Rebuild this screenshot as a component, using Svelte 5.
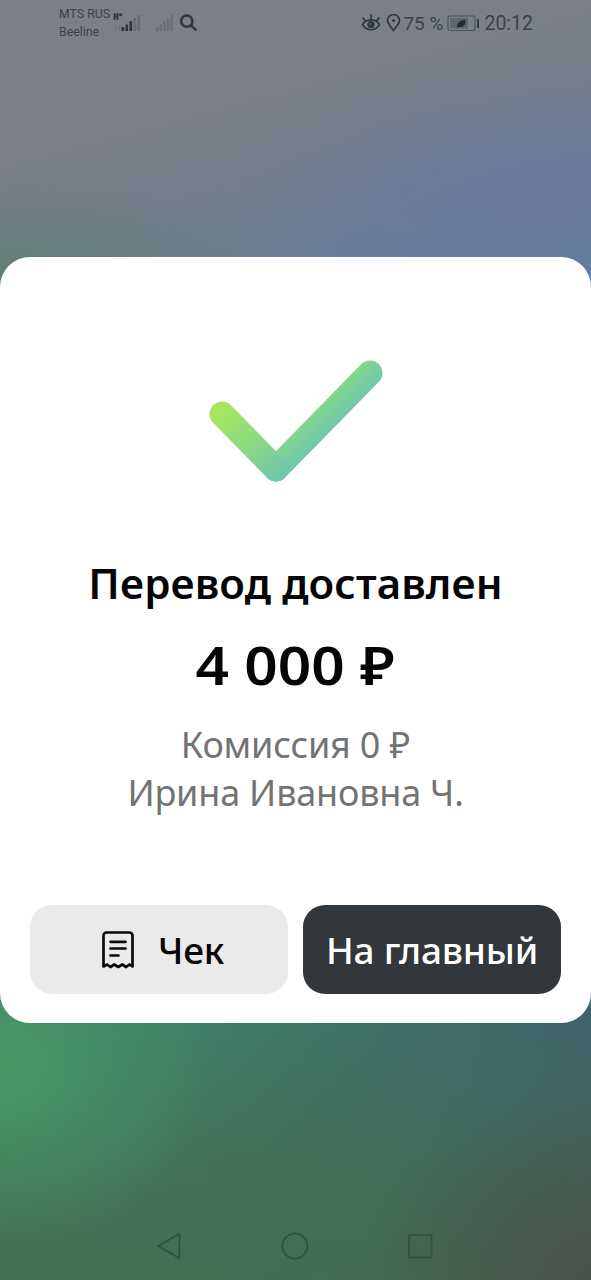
<script lang="ts">
	/**
	 * TransferResult - Confirmation sheet shown once a transfer has been delivered.
	 */
	const carriers = ['MTS RUS', 'Beeline'];
	const battery = '75 %';
	const time = '20:12';

	const transfer = {
		title: 'Перевод доставлен',
		amount: '4 000 ₽',
		fee: 'Комиссия 0 ₽',
		recipient: 'Ирина Ивановна Ч.'
	};

	// Signal bar heights, left to right
	const bars = [4, 6.5, 10, 13, 16];
</script>

<div class="screen">
	<header class="status-bar">
		<div class="carriers">
			{#each carriers as carrier (carrier)}
				<span>{carrier}</span>
			{/each}
		</div>
		<svg class="signal-main" width="29" height="22" viewBox="0 0 29 22">
			<path d="M2.500 2v7M5.500 2v7M2.500 5.500h3M7.100 3.800h3M8.600 2.300v3" stroke="#30363d" stroke-width="1.8" />
			<path d="M4 14v5M2.500 17L4 19L5.500 17M7.500 19v-5M6.200 16L7.500 14l1.300 2" stroke="#686f78" stroke-width=".8" fill="none" />
			{#each bars as h, i}
				<rect x={9.5 + i * 4} y={20 - h} width="2.6" height={h} fill={i < 3 ? '#30353c' : '#646b75'} />
			{/each}
		</svg>
		<svg class="signal-second" width="21" height="22" viewBox="0 0 21 22">
			{#each bars as h, i}
				<rect x={1 + i * 3.6} y={20 - h} width="2.3" height={h} fill="#676e77" />
			{/each}
		</svg>
		<svg class="search" width="18" height="18" viewBox="0 0 18 18">
			<circle cx="6.800" cy="7.200" r="5.600" />
			<path d="M10.800 11.200l5.400 5.200" />
		</svg>

		<div class="status-right">
			<svg width="20" height="18" viewBox="0 0 20 18">
				<path d="M1.500 10.500C5.500 4.300 14.500 4.300 18.500 10.500C14.500 17.500 5.500 17.500 1.500 10.500ZM10 5.500V.5M4.200 7L1.800 3.500M15.800 7L18.200 3.500" fill="none" stroke="#30363e" stroke-width="1.6" />
				<circle cx="10" cy="10.500" r="3.600" fill="#30363e" />
				<circle cx="9.300" cy="9.800" r=".9" fill="#727b88" />
			</svg>
			<svg class="pin" width="15" height="18" viewBox="0 0 15 18">
				<path d="M7.500 16.500C5.500 13 1.500 10 1.500 6.500a6 6 0 0 1 12 0C13.500 10 9.500 13 7.500 16.500Z" fill="none" stroke="#30363e" stroke-width="1.7" />
				<circle cx="7.500" cy="6.500" r="1.500" fill="#30363e" />
			</svg>
			<span class="percent">{battery}</span>
			<svg class="battery" width="33" height="17" viewBox="0 0 33 17">
				<rect x="1" y="1" width="27" height="14.500" rx="2" fill="none" stroke="#4b535e" stroke-width="1.2" />
				<rect x="3" y="3" width="18" height="10.500" fill="#5e6670" />
				<path d="M10 13C9.500 8 12.500 5.500 18.500 4.500C19 10 16.500 13 11.800 11.700L10 13Z" fill="#262c33" />
				<rect x="30" y="4" width="2" height="9" rx=".5" fill="#343b44" />
			</svg>
			<span class="time">{time}</span>
		</div>
	</header>

	<main class="sheet">
		<svg class="check" width="174" height="124" viewBox="0 0 174 124" fill="none">
			<defs>
				<linearGradient id="check-fill" gradientUnits="userSpaceOnUse" x1="12" y1="48" x2="74" y2="110">
					<stop offset="0" stop-color="#a9e55f" />
					<stop offset=".55" stop-color="#8bda84" />
					<stop offset="1" stop-color="#70c8ab" />
				</linearGradient>
				<linearGradient id="check-arm" gradientUnits="userSpaceOnUse" x1="102" y1="52" x2="126" y2="76">
					<stop offset="0" stop-color="#84d88a" />
					<stop offset=".8" stop-color="#70c8ab" />
				</linearGradient>
			</defs>
			<path d="M67 110L161 14" stroke="url(#check-arm)" />
			<path d="M13 55L67 110" stroke="url(#check-fill)" />
		</svg>

		<h1>{transfer.title}</h1>
		<p class="amount">{transfer.amount}</p>
		<p class="detail fee">{transfer.fee}</p>
		<p class="detail recipient">{transfer.recipient}</p>

		<div class="actions">
			<button class="receipt-btn">
				<svg width="32" height="38" viewBox="0 0 32 38" fill="none" stroke="#080808" stroke-width="2.700" stroke-linejoin="round" stroke-linecap="round">
					<path d="M1.500 35.500V4.500a3 3 0 0 1 3-3h23a3 3 0 0 1 3 3V35.500l-3-2-3.400 2.500-3.800-2.500-4 2.500-4-2.500-3.800 2.500-3.500-2.500-3 2Z" />
					<path d="M8.500 10.800h15M8.500 17.500h15M8.500 24.500h8" />
				</svg>
				<span>Чек</span>
			</button>
			<button class="home-btn"><span>На главный</span></button>
		</div>
	</main>

	<nav class="nav-bar">
		<svg width="28" height="28" viewBox="0 0 28 28"><path d="M2.500 14L22 2.500Q23.500 1.500 23.500 3.500V24.500Q23.500 26.500 22 25.500Z" /></svg>
		<svg width="28" height="28" viewBox="0 0 28 28"><circle cx="14" cy="14" r="12.500" /></svg>
		<svg width="28" height="28" viewBox="0 0 28 28"><rect x="3" y="3" width="22.500" height="22.500" rx="1" /></svg>
	</nav>
</div>

<style>
	:global(body) {
		margin: 0;
	}

	.screen {
		display: flex;
		flex-direction: column;
		height: 1280px;
		overflow: hidden;
		font-family: 'Noto Sans', sans-serif;
		background:
			radial-gradient(ellipse 280px 120px at 0 100%, #5a7f6a 0%, #5a7f6a70 40%, #5a7f6a00 100%) 0 0 / 100% 290px no-repeat,
			radial-gradient(ellipse 320px 130px at 92% 68%, #6b7b9f 0%, #6b7b9f80 45%, #6b7b9f00 100%) 0 0 / 100% 290px no-repeat,
			linear-gradient(165deg, #7d8086 0%, #7b7f87 38%, #6e7f92 68%, #5d7fa0 95%) 0 0 / 100% 290px no-repeat,
			radial-gradient(ellipse 210px 180px at 0 27%, #489966 0%, #48996680 45%, #48996600 100%) 0 100% / 100% 290px no-repeat,
			radial-gradient(ellipse 230px 190px at 100% 100%, #48514b 0%, #48514b80 45%, #48514b00 100%) 0 100% / 100% 290px no-repeat,
			linear-gradient(to bottom, #446b4a00 15%, #446b4a88 65%, #446b4acc 100%) 0 100% / 100% 290px no-repeat,
			linear-gradient(105deg, #43855f 0%, #418068 25%, #3f7566 50%, #40676a 80%, #435f68 100%) 0 100% / 100% 290px no-repeat;
	}

	.status-bar {
		display: flex;
		align-items: flex-start;
		box-sizing: border-box;
		height: 257px;
		padding: 5px 58px 0 59px;
		font-family: Roboto, sans-serif;
		color: #3b424b;
	}

	.carriers {
		display: flex;
		flex-direction: column;
		width: 53px;
		font-size: 12.3px;
		line-height: 18px;
		white-space: nowrap;
	}

	.signal-main {
		margin-top: 6px;
	}

	.signal-second {
		margin: 6px 0 0 14px;
	}

	.search {
		margin: 9px 0 0 4px;
		fill: none;
		stroke: #30363e;
		stroke-width: 2.5;
	}

	.status-right {
		display: flex;
		align-items: center;
		height: 36px;
		margin-left: auto;
		font-size: 19.5px;
	}

	.pin {
		margin: 0 2px 0 5px;
	}

	.percent {
		width: 40px;
		font-size: 19px;
		white-space: nowrap;
	}

	.battery {
		margin: 0 4px 0 4px;
	}

	.sheet {
		display: flex;
		flex-direction: column;
		align-items: center;
		box-sizing: border-box;
		height: 766px;
		padding: 102px 30px 29.5px;
		border-radius: 30px;
		background: #fff;
	}

	.check {
		stroke-width: 25px;
		stroke-linecap: round;
	}

	h1,
	p {
		margin: 0;
		white-space: nowrap;
	}

	h1 {
		margin-top: 70px;
		font-size: 42px;
		font-weight: 600;
		line-height: 60px;
		letter-spacing: 0.12px;
		color: #050505;
	}

	.amount {
		margin-top: 15px;
		font-size: 53px;
		font-weight: 600;
		line-height: 74px;
		color: #050505;
		transform: scaleX(1.105);
	}

	.detail {
		font-size: 36px;
		line-height: 48px;
		letter-spacing: -0.2px;
		color: #737373;
	}

	.fee {
		margin-top: 19px;
	}

	.actions {
		display: grid;
		grid-template-columns: 1fr 1fr;
		gap: 15px;
		width: 100%;
		margin-top: auto;
	}

	button {
		display: flex;
		align-items: center;
		justify-content: center;
		height: 88.5px;
		padding: 1px 0 0;
		border: 0;
		border-radius: 22px;
		font: 500 37px / 50px 'Noto Sans', sans-serif;
		letter-spacing: -0.2px;
		white-space: nowrap;
	}

	.receipt-btn {
		gap: 24px;
		padding-left: 8px;
		background: #eaeaea;
		color: #080808;
	}

	.home-btn {
		background: #32373b;
		color: #fff;
	}

	.nav-bar {
		display: flex;
		justify-content: center;
		gap: 97px;
		margin: 209px 1px 0 0;
		fill: none;
		stroke: #31513f;
		stroke-width: 1.7;
	}
</style>
